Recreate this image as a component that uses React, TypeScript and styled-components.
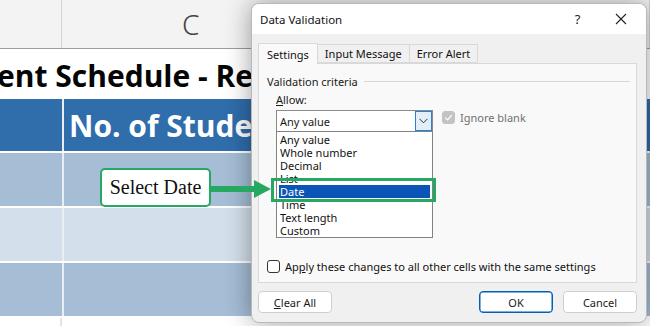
import React from 'react';
import styled, { createGlobalStyle } from 'styled-components';

const GlobalStyle = createGlobalStyle`
  html, body {
    margin: 0;
    padding: 0;
    width: 650px;
    height: 326px;
    overflow: hidden;
    background: #ffffff;
  }
  * { box-sizing: border-box; }
`;

const Stage = styled.div`
  position: relative;
  width: 650px;
  height: 326px;
  overflow: hidden;
`;

// ---------- spreadsheet behind the dialog ----------

const Sheet = styled.div`
  display: flex;
  flex-direction: column;
  width: 650px;
  font-family: 'Open Sans', 'Noto Sans', sans-serif;
`;

const ColumnHeaderRow = styled.div`
  display: grid;
  grid-template-columns: 62px 1fr;
  height: 49px;
  background: #f3f3f3;
  border-bottom: 1px solid #9c9c9c;
`;

const ColumnHeaderCell = styled.div<{ $letter?: boolean }>`
  border-right: 1px solid #d4d4d4;
  display: flex;
  align-items: center;
  padding-left: ${({ $letter }) => ($letter ? '120px' : '0')};
  font-family: 'Noto Sans', sans-serif;
  font-size: 28px;
  font-weight: 300;
  color: #444444;
`;

const TitleRow = styled.div`
  height: 50px;
  background: #ffffff;
  display: flex;
  align-items: center;
  white-space: nowrap;
  overflow: hidden;
  font-size: 30px;
  font-weight: 700;
  color: #050505;
`;

const TitleText = styled.span`
  margin-left: -3px;
  margin-top: 3px;
`;

const BandRow = styled.div<{ $tone: 'head' | 'dark' | 'light' }>`
  display: grid;
  grid-template-columns: 62px 1fr;
  column-gap: 2px;
  height: ${({ $tone }) => ($tone === 'head' ? '52px' : '53px')};
  margin-top: ${({ $tone }) => ($tone === 'head' ? '0' : '2px')};
  background: #e9eef3;
`;

const BandCell = styled.div<{ $tone: 'head' | 'dark' | 'light' }>`
  background: ${({ $tone }) =>
    $tone === 'head' ? '#2f6dab' : $tone === 'dark' ? '#a5bdd5' : '#d3dfea'};
  color: #ffffff;
  font-size: 30px;
  font-weight: 700;
  display: flex;
  align-items: center;
  padding-left: 5px;
  white-space: nowrap;
  overflow: hidden;
`;

const WhiteTail = styled.div`
  display: grid;
  grid-template-columns: 62px 1fr;
  height: 20px;
  margin-top: 2px;
  & > div:first-child {
    border-right: 2px solid #e4e4e4;
  }
`;

// ---------- callout ----------

const Callout = styled.div`
  position: absolute;
  left: 100px;
  top: 168px;
  width: 111px;
  height: 39px;
  background: #ffffff;
  border: 2px solid #27a862;
  border-radius: 5px;
  display: flex;
  align-items: center;
  justify-content: center;
  font-family: 'Liberation Serif', 'DejaVu Serif', serif;
  font-size: 20px;
  color: #111111;
  z-index: 3;
`;

const Arrow = styled.svg`
  position: absolute;
  left: 210px;
  top: 179px;
  z-index: 3;
`;

const DateHighlight = styled.div`
  position: absolute;
  left: 271px;
  top: 178px;
  width: 165px;
  height: 24px;
  border: 3px solid #27a862;
  z-index: 3;
`;

// ---------- dialog ----------

const Dialog = styled.div`
  position: absolute;
  left: 251px;
  top: 3px;
  width: 396px;
  height: 320px;
  background: #f0f0f0;
  border: 1px solid #b9b9b9;
  border-radius: 8px;
  box-shadow: 0 0 26px rgba(0, 0, 0, 0.38);
  overflow: hidden;
  display: flex;
  flex-direction: column;
  font-family: 'Noto Sans', 'Open Sans', sans-serif;
  font-size: 11px;
  color: #1a1a1a;
  z-index: 2;
`;

const TitleBar = styled.div`
  height: 31px;
  background: #ffffff;
  display: flex;
  align-items: center;
  padding: 0 4px 0 8px;
  font-size: 11.5px;
  color: #111111;
`;

const TitleLabel = styled.span`
  flex: 1;
`;

const TitleButton = styled.span`
  width: 43px;
  display: flex;
  justify-content: center;
  align-items: center;
  font-size: 13px;
  color: #222;
`;

const Body = styled.div`
  flex: 1;
  display: flex;
  flex-direction: column;
  padding: 9px 9px 0 6px;
`;

const Tabs = styled.div`
  display: flex;
  align-items: flex-end;
  height: 20px;
`;

const Tab = styled.div<{ $active?: boolean }>`
  height: ${({ $active }) => ($active ? '21px' : '19px')};
  padding: 0 ${({ $active }) => ($active ? '8px' : '7px')};
  display: flex;
  align-items: center;
  border: 1px solid #d9d9d9;
  border-bottom: ${({ $active }) => ($active ? 'none' : '1px solid #d9d9d9')};
  margin-right: -1px;
  background: ${({ $active }) => ($active ? '#f9f9f9' : '#f0f0f0')};
  margin-bottom: ${({ $active }) => ($active ? '-1px' : '0')};
  position: relative;
  z-index: ${({ $active }) => ($active ? 1 : 0)};
  color: #111;
`;

const Panel = styled.div`
  height: 220px;
  background: #f9f9f9;
  border: 1px solid #d9d9d9;
  display: flex;
  flex-direction: column;
  padding: 9px 0 0 8px;
`;

const GroupHeader = styled.div`
  display: flex;
  align-items: center;
  gap: 6px;
  height: 16px;
  padding-right: 6px;
`;

const GroupRule = styled.div`
  flex: 1;
  height: 1px;
  background: #d6d6d6;
`;

const FieldLabel = styled.div`
  margin: 3px 0 0 9px;
  height: 16px;
  line-height: 16px;
`;

const Underlined = styled.span`
  text-decoration: underline;
  text-underline-offset: 1px;
`;

const AllowRow = styled.div`
  display: flex;
  align-items: flex-start;
  margin-left: 9px;
  margin-top: 2px;
  gap: 9px;
`;

const ComboColumn = styled.div`
  display: flex;
  flex-direction: column;
  width: 157px;
  flex: none;
`;

const ComboBox = styled.div`
  height: 22px;
  background: #ffffff;
  border: 1px solid #8a8a8a;
  display: flex;
  align-items: stretch;
`;

const ComboValue = styled.div`
  flex: 1;
  display: flex;
  align-items: center;
  padding-left: 3px;
`;

const ComboButton = styled.div`
  width: 17px;
  background: #e2eef9;
  border: 1px solid #2f7fd0;
  display: flex;
  align-items: center;
  justify-content: center;
`;

const ListBox = styled.div`
  height: 107px;
  margin-top: -1px;
  background: #ffffff;
  border: 1px solid #828282;
  padding: 1px 1px 0 2px;
  display: flex;
  flex-direction: column;
`;

const ListItem = styled.div<{ $selected?: boolean }>`
  height: 13px;
  line-height: 13px;
  padding-left: 1px;
  background: ${({ $selected }) => ($selected ? '#0a55b5' : 'transparent')};
  color: ${({ $selected }) => ($selected ? '#ffffff' : '#111111')};
  margin-right: ${({ $selected }) => ($selected ? '1px' : '0')};
`;

const CheckRow = styled.div<{ $disabled?: boolean }>`
  display: flex;
  align-items: center;
  gap: 5px;
  color: ${({ $disabled }) => ($disabled ? '#707070' : '#111111')};
`;

const CheckBox = styled.div<{ $disabled?: boolean }>`
  width: 13px;
  height: 13px;
  flex: none;
  border-radius: 3px;
  background: ${({ $disabled }) => ($disabled ? '#c3c3c3' : '#ffffff')};
  border: 1px solid ${({ $disabled }) => ($disabled ? '#c3c3c3' : '#333333')};
  display: flex;
  align-items: center;
  justify-content: center;
`;

const Spacer = styled.div`
  flex: 1;
`;

const ApplyRow = styled(CheckRow)`
  margin-bottom: 8px;
`;

const ButtonBar = styled.div`
  display: flex;
  align-items: center;
  gap: 10px;
  height: 39px;
  padding-bottom: 1px;
`;

const DialogButton = styled.div<{ $primary?: boolean }>`
  width: 74px;
  height: 22px;
  background: #ffffff;
  border: ${({ $primary }) => ($primary ? '1px solid #005fb8' : '1px solid #cfcfcf')};
  box-shadow: ${({ $primary }) => ($primary ? 'inset 0 0 0 0.5px #005fb8' : 'none')};
  border-radius: 4px;
  display: flex;
  align-items: center;
  justify-content: center;
`;

const Check = ({ color }: { color: string }) => (
  <svg width="9" height="9" viewBox="0 0 10 10">
    <path d="M1.5 5.2 L4 7.6 L8.6 2.4" fill="none" stroke={color} strokeWidth="1.4" />
  </svg>
);

const items = ['Any value', 'Whole number', 'Decimal', 'List', 'Date', 'Time', 'Text length', 'Custom'];

export default function App() {
  return (
    <Stage>
      <GlobalStyle />
      <Sheet>
        <ColumnHeaderRow>
          <ColumnHeaderCell />
          <ColumnHeaderCell $letter>C</ColumnHeaderCell>
        </ColumnHeaderRow>
        <TitleRow>
          <TitleText>ent Schedule - Re</TitleText>
        </TitleRow>
        <BandRow $tone="head">
          <BandCell $tone="head" />
          <BandCell $tone="head">No. of Students</BandCell>
        </BandRow>
        <BandRow $tone="dark">
          <BandCell $tone="dark" />
          <BandCell $tone="dark" />
        </BandRow>
        <BandRow $tone="light">
          <BandCell $tone="light" />
          <BandCell $tone="light" />
        </BandRow>
        <BandRow $tone="dark">
          <BandCell $tone="dark" />
          <BandCell $tone="dark" />
        </BandRow>
        <WhiteTail>
          <div />
          <div />
        </WhiteTail>
      </Sheet>

      <Callout>Select Date</Callout>
      <Arrow width="62" height="20" viewBox="0 0 62 20">
        <rect x="0" y="7" width="46" height="6" fill="#27a862" />
        <polygon points="44,1 61,10 44,19" fill="#27a862" />
      </Arrow>
      <DateHighlight />

      <Dialog>
        <TitleBar>
          <TitleLabel>Data Validation</TitleLabel>
          <TitleButton>?</TitleButton>
          <TitleButton>
            <svg width="12" height="12" viewBox="0 0 12 12">
              <path d="M1 1 L11 11 M11 1 L1 11" stroke="#222" strokeWidth="1.1" />
            </svg>
          </TitleButton>
        </TitleBar>
        <Body>
          <Tabs>
            <Tab $active>Settings</Tab>
            <Tab>Input Message</Tab>
            <Tab>Error Alert</Tab>
          </Tabs>
          <Panel>
            <GroupHeader>
              <span>Validation criteria</span>
              <GroupRule />
            </GroupHeader>
            <FieldLabel>
              <Underlined>A</Underlined>llow:
            </FieldLabel>
            <AllowRow>
              <ComboColumn>
                <ComboBox>
                  <ComboValue>Any value</ComboValue>
                  <ComboButton>
                    <svg width="9" height="6" viewBox="0 0 9 6">
                      <path d="M0.5 0.8 L4.5 4.8 L8.5 0.8" fill="none" stroke="#333" strokeWidth="1" />
                    </svg>
                  </ComboButton>
                </ComboBox>
                <ListBox>
                  {items.map((label) => (
                    <ListItem key={label} $selected={label === 'Date'}>
                      {label}
                    </ListItem>
                  ))}
                </ListBox>
              </ComboColumn>
              <CheckRow $disabled>
                <CheckBox $disabled>
                  <Check color="#ffffff" />
                </CheckBox>
                Ignore blank
              </CheckRow>
            </AllowRow>
            <Spacer />
            <ApplyRow>
              <CheckBox />
              <span>
                Ap<Underlined>p</Underlined>ly these changes to all other cells with the same settings
              </span>
            </ApplyRow>
          </Panel>
          <ButtonBar>
            <DialogButton>
              <Underlined>C</Underlined>lear All
            </DialogButton>
            <Spacer />
            <DialogButton $primary>OK</DialogButton>
            <DialogButton>Cancel</DialogButton>
          </ButtonBar>
        </Body>
      </Dialog>
    </Stage>
  );
}
